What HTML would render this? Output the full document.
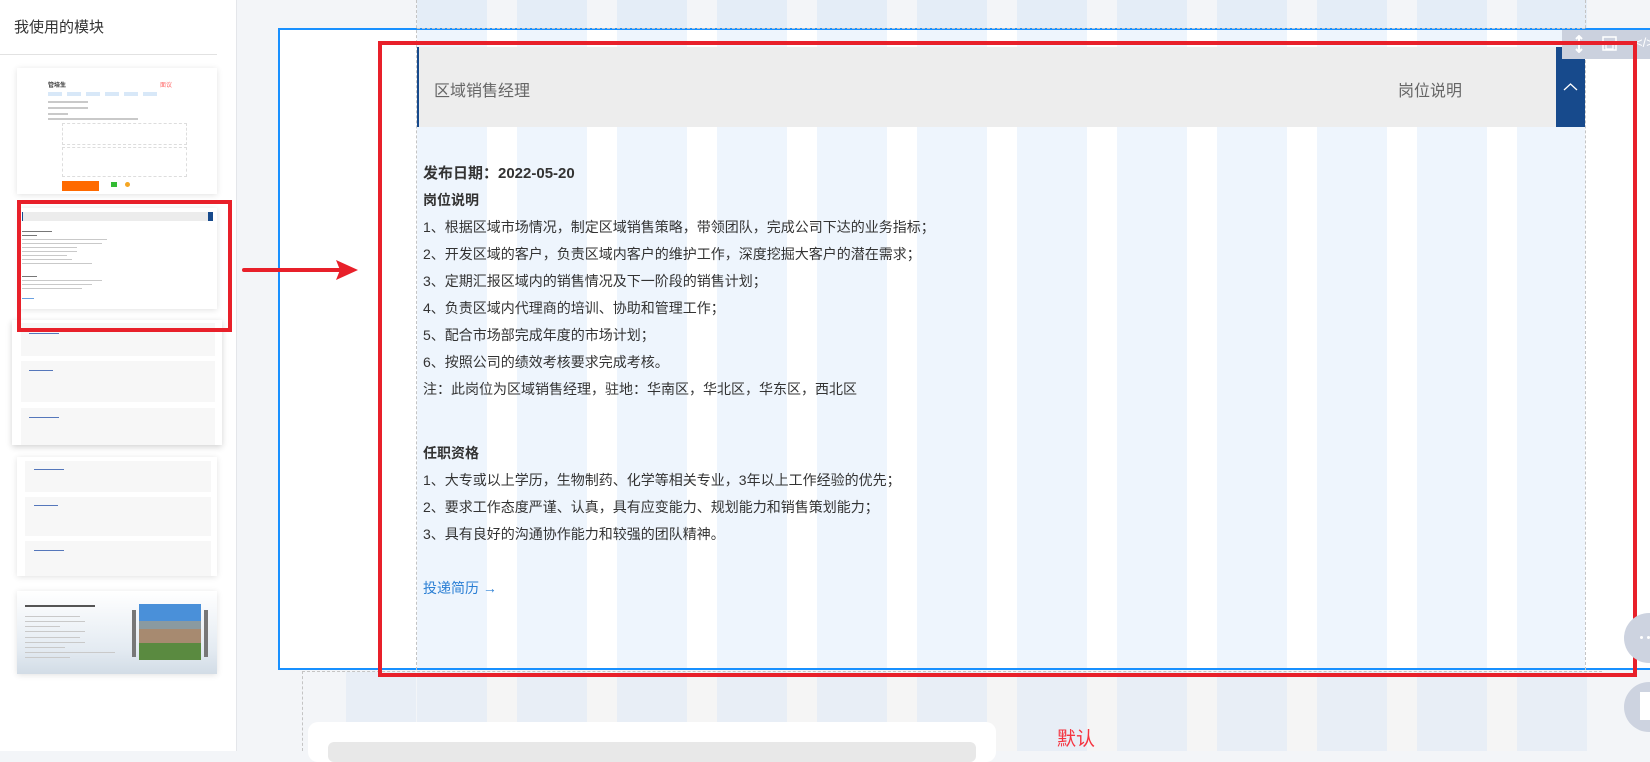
<!DOCTYPE html>
<html><head><meta charset="utf-8">
<style>
*{margin:0;padding:0;box-sizing:border-box}
body{width:1650px;height:751px;overflow:hidden;position:relative;background:#f3f5f8;font-family:"Liberation Sans","Noto Sans CJK SC",sans-serif;color:#333}
.a{position:absolute}
.stripesTop{background:repeating-linear-gradient(90deg,#e4edf7 0 70px,#f3f5f8 70px 100px)}
.stripesW{background:repeating-linear-gradient(90deg,#eef5fd 0 70px,#fff 70px 100px)}
.stripesB{background:repeating-linear-gradient(90deg,#e8eef6 0 70px,#f5f5f5 70px 100px)}
.thumb{position:absolute;background:#fff;box-shadow:0 1px 6px rgba(0,0,0,.12)}
.ln{position:absolute;height:2px;background:#c9c9c9}
.txt p{font-size:14px;line-height:27px;color:#333;white-space:nowrap}
</style></head><body>
<div class="a" style="left:0;top:0;width:237px;height:751px;background:#fff;border-right:1px solid #e4e6ea"></div>
<div class="a" style="left:14px;top:16px;font-size:15px;color:#333">我使用的模块</div>
<div class="a" style="left:0;top:54px;width:217px;height:1px;background:#e2e2e2"></div>

<div class="thumb" style="left:17px;top:68px;width:200px;height:126px">
 <div class="a" style="left:31px;top:12px;font-size:6px;font-weight:bold">管培生</div>
 <div class="a" style="left:143px;top:12px;font-size:6px;color:#f66">面议</div>
 <div class="a" style="left:31px;top:24px;width:110px;height:4px;background:repeating-linear-gradient(90deg,#d8e8f8 0 14px,#fff 14px 19px)"></div>
 <div class="ln" style="left:31px;top:33px;width:40px"></div>
 <div class="ln" style="left:31px;top:39px;width:40px"></div>
 <div class="ln" style="left:31px;top:45px;width:20px"></div>
 <div class="ln" style="left:31px;top:50px;width:90px"></div>
 <div class="a" style="left:45px;top:55px;width:125px;height:22px;border:1px dashed #ddd"></div>
 <div class="a" style="left:45px;top:79px;width:125px;height:30px;border:1px dashed #ddd"></div>
 <div class="a" style="left:45px;top:113px;width:37px;height:10px;background:#ff6a00"></div>
 <div class="a" style="left:94px;top:114px;width:6px;height:5px;background:#3b3"></div>
 <div class="a" style="left:108px;top:114px;width:5px;height:5px;background:#f5a623;border-radius:50%"></div>
</div>
<div class="thumb" style="left:20px;top:208px;width:197px;height:101px">
 <div class="a" style="left:2px;top:4px;width:191px;height:9px;background:#ececec;border-left:1px solid #174a8c"></div>
 <div class="a" style="left:188px;top:4px;width:5px;height:9px;background:#174a8c"></div>
 <div class="ln" style="left:2px;top:23px;width:30px;height:1px;background:#777"></div>
 <div class="ln" style="left:2px;top:27px;width:15px;height:1px;background:#777"></div>
 <div class="ln" style="left:2px;top:31px;width:85px;height:1px"></div>
 <div class="ln" style="left:2px;top:35px;width:80px;height:1px"></div>
 <div class="ln" style="left:2px;top:39px;width:55px;height:1px"></div>
 <div class="ln" style="left:2px;top:43px;width:55px;height:1px"></div>
 <div class="ln" style="left:2px;top:47px;width:45px;height:1px"></div>
 <div class="ln" style="left:2px;top:51px;width:50px;height:1px"></div>
 <div class="ln" style="left:2px;top:55px;width:70px;height:1px"></div>
 <div class="ln" style="left:2px;top:68px;width:15px;height:1px;background:#777"></div>
 <div class="ln" style="left:2px;top:72px;width:80px;height:1px"></div>
 <div class="ln" style="left:2px;top:76px;width:70px;height:1px"></div>
 <div class="ln" style="left:2px;top:80px;width:60px;height:1px"></div>
 <div class="ln" style="left:2px;top:90px;width:12px;height:1px;background:#6aa0e0"></div>
</div>
<div class="thumb" style="left:12px;top:320px;width:210px;height:125px;box-shadow:0 2px 6px rgba(0,0,0,.18)">
 <div class="a" style="left:9px;top:3px;width:194px;height:33px;background:#f7f7f7"></div>
 <div class="a" style="left:9px;top:41px;width:194px;height:41px;background:#f7f7f7"></div>
 <div class="a" style="left:9px;top:88px;width:194px;height:37px;background:#f7f7f7"></div>
 <div class="ln" style="left:17px;top:13px;width:30px;height:1px;background:#5577bb"></div>
 <div class="ln" style="left:17px;top:50px;width:24px;height:1px;background:#5577bb"></div>
 <div class="ln" style="left:17px;top:97px;width:30px;height:1px;background:#5577bb"></div>
</div>
<div class="thumb" style="left:17px;top:457px;width:200px;height:119px">
 <div class="a" style="left:8px;top:4px;width:186px;height:31px;background:#f7f7f7"></div>
 <div class="a" style="left:8px;top:40px;width:186px;height:39px;background:#f7f7f7"></div>
 <div class="a" style="left:8px;top:84px;width:186px;height:35px;background:#f7f7f7"></div>
 <div class="ln" style="left:17px;top:12px;width:30px;height:1px;background:#5577bb"></div>
 <div class="ln" style="left:17px;top:48px;width:24px;height:1px;background:#5577bb"></div>
 <div class="ln" style="left:17px;top:93px;width:30px;height:1px;background:#5577bb"></div>
</div>
<div class="thumb" style="left:17px;top:591px;width:200px;height:83px;background:linear-gradient(#fff,#e4ebf2 70%,#d2dce6)">
 <div class="ln" style="left:8px;top:14px;width:70px;height:2px;background:#555"></div>
 <div class="ln" style="left:8px;top:25px;width:55px;height:1px"></div>
 <div class="ln" style="left:8px;top:30px;width:60px;height:1px"></div>
 <div class="ln" style="left:8px;top:35px;width:35px;height:1px"></div>
 <div class="ln" style="left:8px;top:40px;width:60px;height:1px"></div>
 <div class="ln" style="left:8px;top:46px;width:55px;height:1px"></div>
 <div class="ln" style="left:8px;top:51px;width:60px;height:1px"></div>
 <div class="ln" style="left:8px;top:56px;width:40px;height:1px"></div>
 <div class="ln" style="left:8px;top:61px;width:90px;height:1px"></div>
 <div class="ln" style="left:8px;top:66px;width:45px;height:1px"></div>
 <div class="a" style="left:115px;top:19px;width:4px;height:47px;background:#777"></div>
 <div class="a" style="left:122px;top:13px;width:62px;height:56px;background:linear-gradient(#4a90d9 0 30%,#8a9aa0 30% 45%,#a78a70 45% 70%,#5a8a40 70%)"></div>
 <div class="a" style="left:187px;top:19px;width:4px;height:47px;background:#777"></div>
</div>

<div class="a stripesTop" style="left:417px;top:0;width:1170px;height:30px"></div>
<div class="a" style="left:278px;top:28px;width:1372px;height:642px;background:#fff;border:2px solid #1890ff;border-right:none"></div>
<div class="a stripesW" style="left:417px;top:30px;width:1168px;height:638px"></div>
<div class="a stripesB" style="left:417px;top:672px;width:1170px;height:79px"></div>
<div class="a" style="left:346px;top:672px;width:70px;height:79px;background:#e8eef6"></div>
<div class="a" style="left:416px;top:0;width:0;height:670px;border-left:1px dashed #c4c4c4"></div>
<div class="a" style="left:1585px;top:0;width:0;height:670px;border-left:1px dashed #c4c4c4"></div>
<div class="a" style="left:417px;top:28px;width:1168px;border-top:1px dashed #c4c4c4"></div>
<div class="a" style="left:302px;top:671px;width:0;height:80px;border-left:1px dashed #c4c4c4"></div>
<div class="a" style="left:302px;top:671px;width:1300px;border-top:1px dashed #c4c4c4"></div>

<div class="a" style="left:417px;top:47px;width:1140px;height:80px;background:#ededed;border-left:2px solid #174a8c"></div>
<div class="a" style="left:434px;top:77px;font-size:16px;color:#666">区域销售经理</div>
<div class="a" style="left:1398px;top:77px;font-size:16px;color:#666">岗位说明</div>
<div class="a" style="left:1556px;top:47px;width:29px;height:80px;background:#174a8c"></div>
<svg class="a" style="left:1563px;top:82px" width="15" height="10"><path d="M1 8 L7.5 2 L14 8" stroke="#fff" stroke-width="1.3" fill="none"/></svg>

<div class="a txt" style="left:423px;top:160px">
<p style="font-weight:bold;font-size:15px">发布日期：2022-05-20</p>
<p style="font-weight:bold">岗位说明</p>
<p>1、根据区域市场情况，制定区域销售策略，带领团队，完成公司下达的业务指标；</p>
<p>2、开发区域的客户，负责区域内客户的维护工作，深度挖掘大客户的潜在需求；</p>
<p>3、定期汇报区域内的销售情况及下一阶段的销售计划；</p>
<p>4、负责区域内代理商的培训、协助和管理工作；</p>
<p>5、配合市场部完成年度的市场计划；</p>
<p>6、按照公司的绩效考核要求完成考核。</p>
<p>注：此岗位为区域销售经理，驻地：华南区，华北区，华东区，西北区</p>
<p style="font-weight:bold;margin-top:37px">任职资格</p>
<p>1、大专或以上学历，生物制药、化学等相关专业，3年以上工作经验的优先；</p>
<p>2、要求工作态度严谨、认真，具有应变能力、规划能力和销售策划能力；</p>
<p>3、具有良好的沟通协作能力和较强的团队精神。</p>
<p style="color:#2b7fd4;margin-top:27px">投递简历 →</p>
</div>

<div class="a" style="left:1562px;top:30px;width:88px;height:29px;background:#cbd1de"></div>
<svg class="a" style="left:1570px;top:35px" width="18" height="18"><path d="M9 1 V17 M1 9 H17 M6 4 L9 1 L12 4 M6 14 L9 17 L12 14" stroke="#fff" stroke-width="2" fill="none"/></svg>
<svg class="a" style="left:1602px;top:36px" width="15" height="15"><rect x="1" y="1" width="13" height="13" fill="none" stroke="#fff" stroke-width="1.5"/><rect x="4" y="8" width="7" height="5" fill="none" stroke="#fff" stroke-width="1.3"/></svg>
<div class="a" style="left:1635px;top:35px;color:#fff;font-size:13px">&lt;/&gt;</div>

<div class="a" style="left:17px;top:200px;width:215px;height:132px;border:4px solid #e8202a"></div>
<div class="a" style="left:378px;top:41px;width:1259px;height:636px;border:4px solid #e8202a"></div>
<div class="a" style="left:242px;top:268px;width:100px;height:4px;background:#e8202a;border-radius:2px"></div>
<svg class="a" style="left:336px;top:260px" width="22" height="20"><path d="M0 0 L22 10 L0 20 L4 10 Z" fill="#e8202a"/></svg>

<div class="a" style="left:308px;top:722px;width:688px;height:40px;background:#fff;border-radius:10px"></div>
<div class="a" style="left:328px;top:742px;width:648px;height:20px;background:#e8e8e8;border-radius:6px"></div>
<div class="a" style="left:1057px;top:724px;font-size:19px;color:#f5333f">默认</div>

<div class="a" style="left:1624px;top:613px;width:50px;height:50px;border-radius:50%;background:#cdd3e0"></div>
<div class="a" style="left:1640px;top:636px;width:3px;height:3px;background:#fff;border-radius:50%"></div>
<div class="a" style="left:1647px;top:636px;width:3px;height:3px;background:#fff;border-radius:50%"></div>
<div class="a" style="left:1624px;top:682px;width:50px;height:50px;border-radius:50%;background:#cdd3e0"></div>
<div class="a" style="left:1640px;top:692px;width:12px;height:28px;background:#fff"></div>
</body></html>
